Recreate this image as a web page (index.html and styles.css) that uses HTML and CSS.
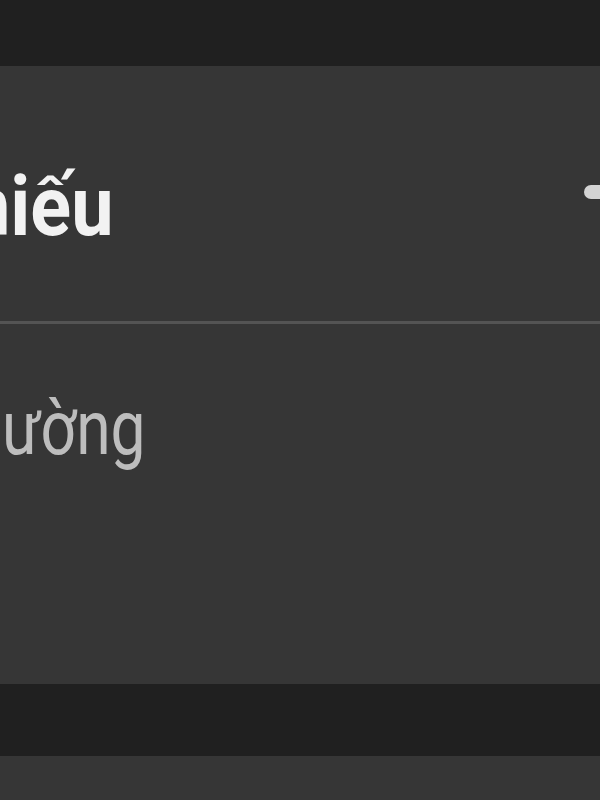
FILE: index.html
```html
<!DOCTYPE html>
<html lang="vi">
<head>
<meta charset="utf-8">
<title>Cài đặt</title>
<link rel="stylesheet" href="styles.css">
</head>
<body>
<div class="screen">
  <div class="topbar"></div>
  <div class="panel">
    <div class="row row-title">
      <span class="title">hiếu</span>
      <span class="toggle"></span>
    </div>
    <div class="divider"></div>
    <div class="row row-sub">
      <span class="sub">ường</span>
    </div>
  </div>
  <div class="band"></div>
  <div class="panel panel-next"></div>
</div>
</body>
</html>
```

FILE: styles.css
```css
html, body {
  margin: 0;
  padding: 0;
  background: #363636;
}
.screen {
  width: 600px;
  height: 800px;
  overflow: hidden;
  display: flex;
  flex-direction: column;
  font-family: Roboto, "Noto Sans", sans-serif;
}
.topbar {
  height: 66px;
  background: #202020;
  flex: none;
}
.panel {
  background: #363636;
  height: 618px;
  flex: none;
  display: flex;
  flex-direction: column;
}
.row-title {
  height: 255px;
  display: flex;
  align-items: center;
  justify-content: space-between;
}
.title {
  display: inline-block;
  font-size: 84px;
  font-weight: 700;
  line-height: 1;
  color: #f2f2f2;
  margin-left: -32px;
  margin-top: 26px;
  transform: scaleX(0.9);
  transform-origin: left center;
}
.toggle {
  width: 32px;
  height: 14px;
  border-radius: 7px;
  background: #d4d4d4;
  margin-right: -16px;
  margin-top: -4px;
}
.divider {
  height: 3px;
  background: #545454;
  flex: none;
}
.row-sub {
  padding-top: 66px;
}
.sub {
  display: inline-block;
  font-size: 76px;
  font-weight: 400;
  line-height: 76px;
  color: #bdbdbd;
  margin-left: 2px;
  transform: scaleX(0.82);
  transform-origin: left center;
}
.band {
  height: 72px;
  background: #202020;
  flex: none;
}
.panel-next {
  flex: 1;
}
```
